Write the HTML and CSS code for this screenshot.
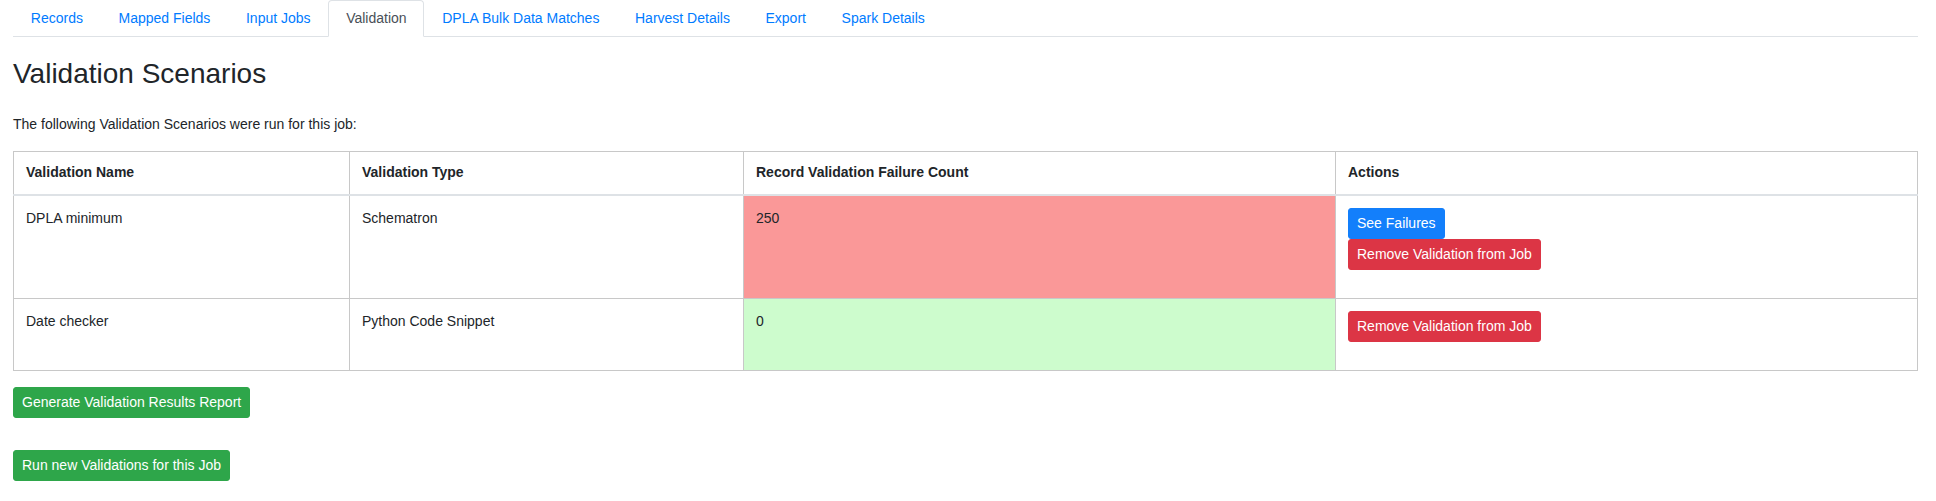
FILE: index.html
```html
<!DOCTYPE html>
<html lang="en">
<head>
<meta charset="utf-8">
<title>Validation</title>
<link rel="stylesheet" href="styles.css">
</head>
<body>
<div class="page">
  <ul class="tabs">
    <li><a class="tab" href="#">Records</a></li>
    <li><a class="tab" href="#">Mapped Fields</a></li>
    <li><a class="tab" href="#">Input Jobs</a></li>
    <li><a class="tab active" href="#">Validation</a></li>
    <li><a class="tab" href="#">DPLA Bulk Data Matches</a></li>
    <li><a class="tab" href="#">Harvest Details</a></li>
    <li><a class="tab" href="#">Export</a></li>
    <li><a class="tab" href="#">Spark Details</a></li>
  </ul>

  <h2 class="title">Validation Scenarios</h2>
  <p class="intro">The following Validation Scenarios were run for this job:</p>

  <table class="vtable">
    <thead>
      <tr>
        <th class="c-name">Validation Name</th>
        <th class="c-type">Validation Type</th>
        <th class="c-count">Record Validation Failure Count</th>
        <th class="c-actions">Actions</th>
      </tr>
    </thead>
    <tbody>
      <tr>
        <td>DPLA minimum</td>
        <td>Schematron</td>
        <td class="fail">250</td>
        <td>
          <div class="actions">
            <a class="btn btn-blue" href="#">See Failures</a>
            <button class="btn btn-red" type="button">Remove Validation from Job</button>
          </div>
        </td>
      </tr>
      <tr>
        <td>Date checker</td>
        <td>Python Code Snippet</td>
        <td class="pass">0</td>
        <td>
          <div class="actions">
            <button class="btn btn-red" type="button">Remove Validation from Job</button>
          </div>
        </td>
      </tr>
    </tbody>
  </table>

  <div class="bottom">
    <button class="btn btn-green" type="button">Generate Validation Results Report</button>
    <button class="btn btn-green" type="button">Run new Validations for this Job</button>
  </div>
</div>
</body>
</html>
```

FILE: styles.css
```css
* { box-sizing: border-box; }

html, body {
  margin: 0;
  padding: 0;
  background: #fff;
}

body {
  font-family: "Liberation Sans", Arial, Helvetica, sans-serif;
  font-size: 14px;
  line-height: 21px;
  color: #212529;
}

.page {
  padding: 0 18px 0 13px;
}

.tabs {
  list-style: none;
  margin: 0;
  padding: 0;
  display: flex;
  border-bottom: 1px solid #dee2e6;
}

.tabs li {
  margin-bottom: -1px;
}

.tab {
  display: block;
  padding: 7px 16.8px;
  border: 1px solid transparent;
  border-top-left-radius: 4px;
  border-top-right-radius: 4px;
  color: #007bff;
  text-decoration: none;
  line-height: 21px;
}

.tab.active {
  color: #495057;
  background: #fff;
  border-color: #dee2e6 #dee2e6 #fff;
}

.title {
  font-size: 28px;
  font-weight: normal;
  line-height: 33.6px;
  margin: 20px 0 0;
}

.intro {
  margin: 23px 0 0;
}

.vtable {
  margin-top: 16px;
  width: 100%;
  border-collapse: collapse;
  table-layout: fixed;
}

.vtable th,
.vtable td {
  border: 1px solid #c8c8c8;
  padding: 12px 12px;
  text-align: left;
  vertical-align: top;
}

.vtable th {
  font-weight: bold;
  padding-top: 10.5px;
  padding-bottom: 10.5px;
  border-bottom: 2px solid #dee2e6;
}

.c-name { width: 336px; }
.c-type { width: 394px; }
.c-count { width: 592px; }

.fail { background: #fa9898; }
.pass { background: #cdfccd; }

.actions {
  display: flex;
  flex-direction: column;
  align-items: flex-start;
  margin-bottom: 16px;
}

.btn {
  display: inline-block;
  font-family: inherit;
  font-size: 14px;
  line-height: 21px;
  padding: 4px 8px;
  border: 1px solid transparent;
  border-radius: 3px;
  color: #fff;
  text-decoration: none;
  cursor: pointer;
}

.btn-blue { background: #137ffb; border-color: #137ffb; }
.btn-red { background: #dc3545; border-color: #dc3545; }
.btn-green { background: #2ea64a; border-color: #2ea64a; }

.bottom {
  display: flex;
  flex-direction: column;
  align-items: flex-start;
  gap: 32px;
  margin-top: 16px;
}
```
